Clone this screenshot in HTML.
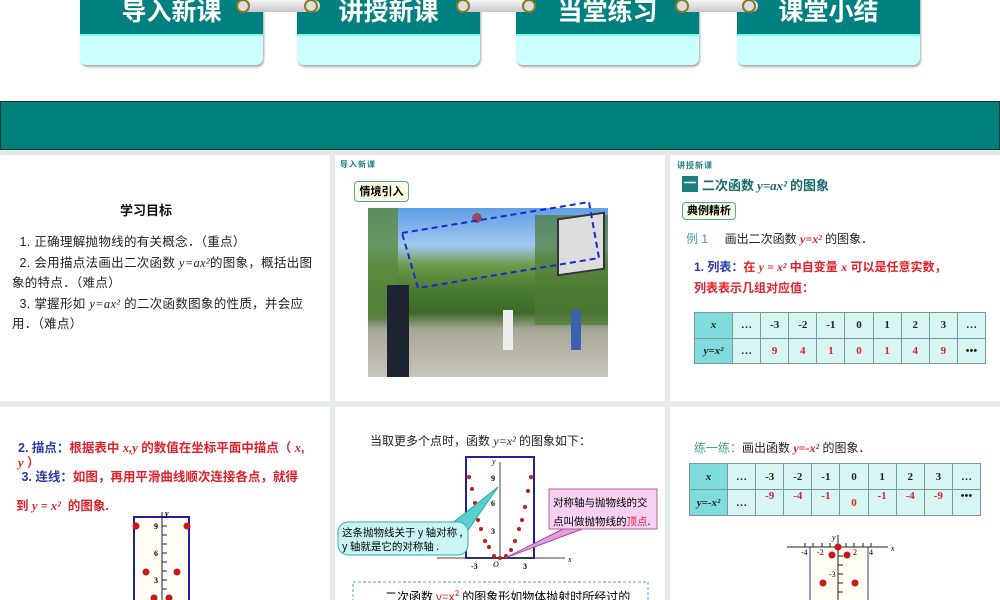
<!DOCTYPE html>
<html><head><meta charset="utf-8"><style>
*{margin:0;padding:0;box-sizing:border-box}
body{width:1000px;height:600px;overflow:hidden;background:#fff;position:relative;font-family:"Liberation Sans","Noto Sans CJK SC",sans-serif}
.a{position:absolute}
.tab{position:absolute;top:-4px;width:183px;height:69px;border-radius:0 0 7px 7px;background:#ccffff;box-shadow:1px 2px 2px #aaa;overflow:hidden}
.tab .t{height:40px;background:#008080;color:#fff;font:bold 25px "Noto Sans CJK SC",sans-serif;text-align:center;line-height:28px;border-bottom:2px solid #7fd;}
.ring{position:absolute;top:0;height:12px;background:linear-gradient(#f4f4f4,#c8c8c8);border-radius:6px}
.dot{position:absolute;width:14px;height:14px;border-radius:50%;border:2px solid #8a7a20;background:#ddd;top:-1px}
.p{position:absolute;background:#fff}
.s{font-size:12px;color:#222;font-family:"Liberation Sans","Noto Sans CJK SC",sans-serif}
i{font-family:"Liberation Serif",serif}
.red{color:#e0202a}
.blue{color:#2a3aa8}
table{border-collapse:collapse;position:absolute;table-layout:fixed}
td{border:1px solid #7a9a9a;background:#d6f5f3;text-align:center;font:bold 11px "Liberation Serif",serif;color:#222}
td.h{background:#80dcdc}
</style></head><body>
<div class="a" style="left:0;top:0;width:1000px;height:600px;background:#e7eaea"></div>
<div class="a" style="left:0;top:0;width:1000px;height:101px;background:#fff"></div>
<div class="tab" style="left:80px"><div class="t">导入新课</div></div>
<div class="tab" style="left:297px"><div class="t">讲授新课</div></div>
<div class="tab" style="left:516px"><div class="t">当堂练习</div></div>
<div class="tab" style="left:737px"><div class="t">课堂小结</div></div>
<div class="ring" style="left:240px;width:80px"></div>
<div class="ring" style="left:460px;width:76px"></div>
<div class="ring" style="left:678px;width:80px"></div>
<div class="dot" style="left:236px"></div><div class="dot" style="left:304px"></div>
<div class="dot" style="left:456px"></div><div class="dot" style="left:522px"></div>
<div class="dot" style="left:675px"></div><div class="dot" style="left:742px"></div>
<div class="a" style="left:0;top:101px;width:1000px;height:49px;background:#007f7b;border:1px solid #1a3a3a"></div>

<!-- row 1 -->
<div class="p" style="left:0;top:155px;width:330px;height:246px">
 <div class="a" style="left:120px;top:45px;font:bold 13px 'Noto Sans CJK SC',sans-serif;color:#111">学习目标</div>
 <div class="a s" style="left:12px;top:77px;width:312px;line-height:20.5px;font-size:12.5px;letter-spacing:0.3px">&nbsp;&nbsp;1. 正确理解抛物线的有关概念．（重点）<br>&nbsp;&nbsp;2. 会用描点法画出二次函数 <i>y=ax²</i>的图象，概括出图象的特点．（难点）<br>&nbsp;&nbsp;3. 掌握形如 <i>y=ax²</i> 的二次函数图象的性质，并会应用．（难点）</div>
</div>
<div class="p" style="left:335px;top:155px;width:330px;height:246px">
 <div class="a" style="left:5px;top:4px;font:bold 8px 'Noto Sans CJK SC',sans-serif;color:#1a8080;letter-spacing:1px">导入新课</div>
 <div class="a" style="left:19px;top:26px;width:55px;height:21px;border:1.5px solid #4aa8b8;border-radius:4px;background:#fffbe0;font:bold 11px 'Noto Sans CJK SC',sans-serif;text-align:center;line-height:18px">情境引入</div>
 <div class="a" style="left:33px;top:53px;width:240px;height:169px;background:linear-gradient(#5f9ee6 0%,#a0c8ee 22%,#6f9a4a 34%,#4a7a30 48%,#3d6a28 62%,#a8a898 72%,#c8c4bc 100%)"></div>
 <div class="a" style="left:33px;top:53px;width:30px;height:110px;background:#5a8a3e;opacity:.8"></div>
 <div class="a" style="left:200px;top:60px;width:73px;height:110px;background:#4f7a34;opacity:.7"></div>
 <div class="a" style="left:52px;top:130px;width:22px;height:92px;background:#1f2433"></div>
 <div class="a" style="left:168px;top:155px;width:10px;height:40px;background:#eee"></div>
 <div class="a" style="left:236px;top:155px;width:10px;height:40px;background:#3a60b0"></div>
 <div class="a" style="left:222px;top:60px;width:48px;height:58px;background:#ddd;border:2px solid #333;transform:skewY(-8deg)"></div>
 <div class="a" style="left:137px;top:58px;width:10px;height:10px;border-radius:50%;background:#9a4a5a"></div>
 <svg class="a" style="left:0;top:0" width="330" height="246"><polygon points="67,78 254,47 264,103 83,133" fill="none" stroke="#1a2ad0" stroke-width="2" stroke-dasharray="6,4"/></svg>
</div>
<div class="p" style="left:670px;top:155px;width:330px;height:246px">
 <div class="a" style="left:7px;top:5px;font:bold 8px 'Noto Sans CJK SC',sans-serif;color:#1a8080;letter-spacing:1px">讲授新课</div>
 <div class="a" style="left:12px;top:21px;width:16px;height:16px;background:#1a7e7e;color:#fff;font:bold 12px sans-serif;text-align:center;line-height:15px">一</div>
 <div class="a" style="left:32px;top:20px;font:bold 13px 'Noto Sans CJK SC',sans-serif;color:#1a6a6a">二次函数 <i>y=ax²</i> 的图象</div>
 <div class="a" style="left:12px;top:47px;width:54px;height:18px;border:1.5px solid #4aa8b8;border-radius:4px;background:#fffbe0;font:bold 11px 'Noto Sans CJK SC',sans-serif;text-align:center;line-height:15px">典例精析</div>
 <div class="a s" style="left:16px;top:75px"><span style="color:#4a9a9a">例 1</span>&nbsp;&nbsp;&nbsp;&nbsp;&nbsp;画出二次函数 <b class="red"><i>y=x²</i></b> 的图象．</div>
 <div class="a s" style="left:24px;top:101px;line-height:23px;font-weight:bold"><span class="blue">1. 列表：</span><span class="red">在 <i>y = x²</i> 中自变量 <i>x</i> 可以是任意实数，</span></div>
 <div class="a s red" style="left:24px;top:124px;font-weight:bold">列表表示几组对应值：</div>
 <table style="left:24px;top:157px;width:292px;height:52px"><colgroup><col style="width:38px"><col span="9"></colgroup><tr><td class="h"><i>x</i></td><td>…</td><td>-3</td><td>-2</td><td>-1</td><td>0</td><td>1</td><td>2</td><td>3</td><td>…</td></tr><tr><td class="h"><i>y=x²</i></td><td>…</td><td class="red">9</td><td class="red">4</td><td class="red">1</td><td class="red">0</td><td class="red">1</td><td class="red">4</td><td class="red">9</td><td>•••</td></tr></table>
</div>

<!-- row 2 -->
<div class="p" style="left:0;top:407px;width:330px;height:193px">
 <div class="a s" style="left:18px;top:34px;width:300px;line-height:14.5px;font-weight:bold;font-size:12.5px"><span class="blue">2. 描点：</span><span class="red">根据表中 <i>x,y</i> 的数值在坐标平面中描点（ <i>x</i>,<br><i>y</i> ）</span><br>&nbsp;<span class="blue">3. 连线：</span><span class="red">如图，再用平滑曲线顺次连接各点，就得</span></div>
 <div class="a s red" style="left:16px;top:88px;font-weight:bold;font-size:12.5px">到 <i>y = x²</i>&nbsp; 的图象.</div>
</div>
<div class="p" style="left:335px;top:407px;width:330px;height:193px">
 <div class="a s" style="left:35px;top:25px">当取更多个点时，函数 <i>y=x²</i> 的图象如下：</div>
</div>
<div class="p" style="left:670px;top:407px;width:330px;height:193px">
 <div class="a s" style="left:24px;top:32px"><span style="color:#4a9a9a">练一练：</span>画出函数 <b class="red"><i>y=-x²</i></b> 的图象．</div>
 <table style="left:19px;top:56px;width:292px;height:53px"><colgroup><col style="width:38px"><col span="9"></colgroup><tr><td class="h"><i>x</i></td><td>…</td><td>-3</td><td>-2</td><td>-1</td><td>0</td><td>1</td><td>2</td><td>3</td><td>…</td></tr><tr><td class="h"><i>y=-x²</i></td><td>…</td><td class="red" style="vertical-align:top">-9</td><td class="red" style="vertical-align:top">-4</td><td class="red" style="vertical-align:top">-1</td><td class="red">0</td><td class="red" style="vertical-align:top">-1</td><td class="red" style="vertical-align:top">-4</td><td class="red" style="vertical-align:top">-9</td><td style="vertical-align:top">•••</td></tr></table>
</div>

<svg class="a" style="left:0;top:0" width="1000" height="600" font-family="Liberation Serif,serif">
 <rect x="134" y="517" width="55" height="90" fill="#fffdf5" stroke="#2020a0" stroke-width="2"/>
 <line x1="162" y1="512" x2="162" y2="600" stroke="#222"/>
 <g stroke="#222"><line x1="162" y1="526" x2="167" y2="526"/><line x1="162" y1="535" x2="167" y2="535"/><line x1="162" y1="544" x2="167" y2="544"/><line x1="162" y1="553" x2="167" y2="553"/><line x1="162" y1="562" x2="167" y2="562"/><line x1="162" y1="571" x2="167" y2="571"/><line x1="162" y1="580" x2="167" y2="580"/><line x1="162" y1="589" x2="167" y2="589"/></g>
 <g font-size="8" font-weight="bold"><text x="154" y="529">9</text><text x="154" y="556">6</text><text x="154" y="583">3</text><text x="165" y="516" font-style="italic">y</text></g>
 <g fill="#c81818"><circle cx="136" cy="526" r="3.5"/><circle cx="187" cy="526" r="3.5"/><circle cx="146" cy="572" r="3.5"/><circle cx="177" cy="572" r="3.5"/><circle cx="154" cy="598" r="3.5"/><circle cx="169" cy="598" r="3.5"/></g>
 <rect x="466" y="457" width="68" height="101" fill="#fff" stroke="#2020a0" stroke-width="2"/>
 <line x1="437" y1="558" x2="565" y2="558" stroke="#444"/>
 <line x1="500" y1="462" x2="500" y2="560" stroke="#444"/>
 <g font-size="8" font-weight="bold"><text x="491" y="481">9</text><text x="491" y="506">6</text><text x="491" y="534">3</text><text x="471" y="569">-3</text><text x="523" y="569">3</text><text x="493" y="567" font-style="italic" font-weight="normal">O</text><text x="492" y="464" font-style="italic" font-weight="normal">y</text><text x="568" y="562" font-style="italic" font-weight="normal">x</text></g>
 <g fill="#c81818"><circle cx="469" cy="477" r="2"/><circle cx="472" cy="489" r="2"/><circle cx="475" cy="503" r="2"/><circle cx="478" cy="520" r="2"/><circle cx="481" cy="529" r="2"/><circle cx="485" cy="541" r="2"/><circle cx="489" cy="547" r="2"/><circle cx="494" cy="556" r="2"/><circle cx="500" cy="558" r="2"/><circle cx="506" cy="556" r="2"/><circle cx="511" cy="550" r="2"/><circle cx="515" cy="541" r="2"/><circle cx="519" cy="529" r="2"/><circle cx="522" cy="520" r="2"/><circle cx="525" cy="507" r="2"/><circle cx="528" cy="491" r="2"/><circle cx="531" cy="477" r="2"/></g>
 <polygon points="450,525 498,487 468,530" fill="#58d0d0" stroke="#2aa"/>
 <rect x="338" y="522" width="130" height="33" rx="10" fill="#c8f4f4" stroke="#3ab"/>
 <text x="342" y="536" font-family="Noto Sans CJK SC,sans-serif" font-size="10.5">这条抛物线关于 y 轴对称 ,</text>
 <text x="342" y="550" font-family="Noto Sans CJK SC,sans-serif" font-size="10.5">y 轴就是它的对称轴 .</text>
 <polygon points="565,528 505,558 585,528" fill="#e0a0d8" stroke="#a4a"/>
 <rect x="549" y="489" width="108" height="40" fill="#f8d0f4" stroke="#b06090"/>
 <text x="553" y="506" font-family="Noto Sans CJK SC,sans-serif" font-size="10.5">对称轴与抛物线的交</text>
 <text x="553" y="525" font-family="Noto Sans CJK SC,sans-serif" font-size="10.5">点叫做抛物线的<tspan fill="#e02030">顶点</tspan>.</text>
 <rect x="353" y="582" width="295" height="30" fill="#fff" stroke="#4ab" stroke-dasharray="3,2"/>
 <text x="385" y="601" font-family="Noto Sans CJK SC,sans-serif" font-size="12">二次函数 <tspan fill="#e02030">y=x²</tspan> 的图象形如物体抛射时所经过的</text>
 <rect x="810" y="547" width="58" height="60" fill="#fffdf5" stroke="#2040a0"/>
 <line x1="787" y1="547" x2="888" y2="547" stroke="#222"/>
 <line x1="838" y1="535" x2="838" y2="600" stroke="#222"/>
 <g stroke="#222"><line x1="805" y1="543" x2="805" y2="547"/><line x1="813" y1="543" x2="813" y2="547"/><line x1="822" y1="543" x2="822" y2="547"/><line x1="830" y1="543" x2="830" y2="547"/><line x1="846" y1="543" x2="846" y2="547"/><line x1="854" y1="543" x2="854" y2="547"/><line x1="863" y1="543" x2="863" y2="547"/><line x1="871" y1="543" x2="871" y2="547"/><line x1="838" y1="556" x2="843" y2="556"/><line x1="838" y1="565" x2="843" y2="565"/><line x1="838" y1="574" x2="843" y2="574"/><line x1="838" y1="583" x2="843" y2="583"/><line x1="838" y1="592" x2="843" y2="592"/></g>
 <g font-size="8"><text x="801" y="555">-4</text><text x="817" y="555">-2</text><text x="853" y="555">2</text><text x="869" y="555">4</text><text x="829" y="577">-3</text><text x="832" y="540" font-style="italic">y</text><text x="891" y="551" font-style="italic">x</text></g>
 <g fill="#c81818"><circle cx="838" cy="547" r="3.5"/><circle cx="832" cy="555" r="3.5"/><circle cx="847" cy="555" r="3.5"/><circle cx="823" cy="583" r="3.5"/><circle cx="855" cy="583" r="3.5"/></g>
</svg>
</body></html>
